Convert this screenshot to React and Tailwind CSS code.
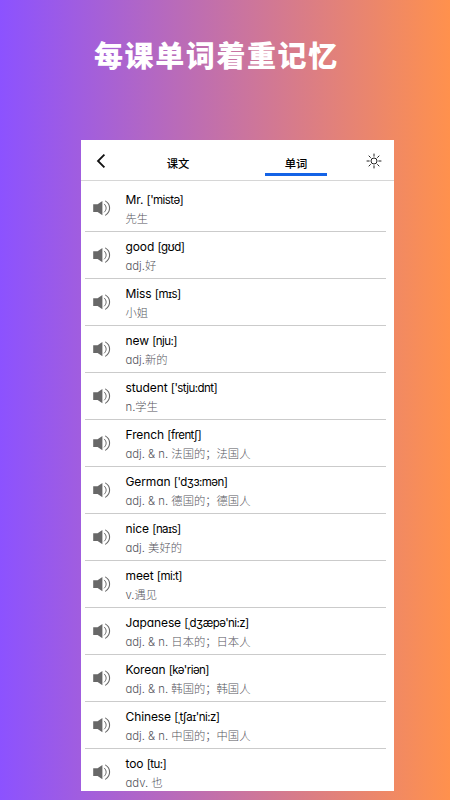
import React, { useState } from 'react';

const words = [
  { word: 'Mr.', phonetic: "['mistə]", meaning: '先生' },
  { word: 'good', phonetic: '[gʊd]', meaning: 'adj.好' },
  { word: 'Miss', phonetic: '[mɪs]', meaning: '小姐' },
  { word: 'new', phonetic: '[nju:]', meaning: 'adj.新的' },
  { word: 'student', phonetic: "['stju:dnt]", meaning: 'n.学生' },
  { word: 'French', phonetic: '[frentʃ]', meaning: 'adj. & n. 法国的；法国人' },
  { word: 'German', phonetic: "['dʒɜ:mən]", meaning: 'adj. & n. 德国的；德国人' },
  { word: 'nice', phonetic: '[naɪs]', meaning: 'adj. 美好的' },
  { word: 'meet', phonetic: '[mi:t]', meaning: 'v.遇见' },
  { word: 'Japanese', phonetic: "[ˌdʒæpə'ni:z]", meaning: 'adj. & n. 日本的；日本人' },
  { word: 'Korean', phonetic: "[kə'riən]", meaning: 'adj. & n. 韩国的；韩国人' },
  { word: 'Chinese', phonetic: "[ˌtʃaɪ'ni:z]", meaning: 'adj. & n. 中国的；中国人' },
  { word: 'too', phonetic: '[tu:]', meaning: 'adv. 也' },
];

const tabs = [
  { key: 'text', label: '课文' },
  { key: 'words', label: '单词' },
];

const SpeakerIcon = () => (
  <svg className="w-[18px] h-[18px] shrink-0" viewBox="0 0 18 18" fill="none">
    <path d="M0.2 5.2h4.4L9.4 2v14.2l-4.8-3.3H0.2z" fill="#686868" />
    <path d="M11.4 5.2c2.4 2.3 2.4 5.5 0 7.8" stroke="#6b6b6b" strokeWidth="1" strokeLinecap="round" />
    <path d="M12.6 2.1c5.3 3.1 5.3 10.9 0 14" stroke="#6b6b6b" strokeWidth="1.1" strokeLinecap="round" />
  </svg>
);

const BackIcon = () => (
  <svg className="w-[10px] h-[14px]" viewBox="0 0 10 14" fill="none">
    <path d="M8.4 0.6L2 7l6.4 6.4" stroke="#111" strokeWidth="1.8" />
  </svg>
);

const SunIcon = () => (
  <svg className="w-4 h-4" viewBox="0 0 16 16" fill="none" stroke="#222" strokeWidth="1">
    <circle cx="8" cy="8" r="3" />
    <path d="M8 0.6v3M8 12.4v3M0.6 8h3M12.4 8h3M2.7 2.7l2 2M11.3 11.3l2 2M2.7 13.3l2-2M11.3 4.7l2-2" />
  </svg>
);

const WordRow = ({ item }) => (
  <li className="flex items-center h-[47px] shrink-0 border-b border-[#cbcbcb] pl-[8px]">
    <SpeakerIcon />
    <div className="ml-[14.5px] pt-px whitespace-nowrap">
      <p className="h-[19px] leading-[19px] text-[12px] tracking-[-0.1px] text-black">
        {item.word}{' '}
        <span className="text-[11.5px] tracking-[-0.55px] [font-feature-settings:normal]">{item.phonetic}</span>
      </p>
      <p className="h-[19px] leading-[21px] text-[11.3px] font-light text-[#55555d]">{item.meaning}</p>
    </div>
  </li>
);

const App = () => {
  const [activeTab, setActiveTab] = useState('words');

  return (
    <div className="w-full h-[800px] overflow-hidden bg-linear-to-r/srgb from-[#8c52ff] to-[#ff914d] font-['Inter','Noto_Sans_CJK_SC',sans-serif] [font-feature-settings:'cv11','ss03']">
      <h1 className="h-[140px] pt-[33px] pl-[94px] text-[29px] leading-[42px] tracking-[1.6px] font-black text-white font-['Noto_Sans_CJK_SC',sans-serif] whitespace-nowrap">
        每课单词着重记忆
      </h1>

      <div className="ml-[81px] w-[313px] h-[651px] bg-white overflow-hidden">
        {/* Top bar */}
        <header className="flex h-[41px] border-b border-[#d6d6d6]">
          <button className="w-[66px] pl-[15px] pt-[2px]">
            <BackIcon />
          </button>
          {tabs.map((tab) => (
            <button
              key={tab.key}
              onClick={() => setActiveTab(tab.key)}
              className={`h-[36px] w-[62px] pt-[16px] text-[11.3px] font-medium text-black border-b-[3px] ${
                tab.key === 'words' ? 'ml-[56px]' : ''
              } ${activeTab === tab.key ? 'border-[#1463e6]' : 'border-transparent'}`}
            >
              {tab.label}
            </button>
          ))}
          <button className="ml-auto mr-[12px] pt-[2px]">
            <SunIcon />
          </button>
        </header>

        {/* Word list */}
        <ul className="ml-1 w-[301px] pt-[4px]">
          {words.map((item) => (
            <WordRow key={item.word} item={item} />
          ))}
        </ul>
      </div>
    </div>
  );
};

export default App;
